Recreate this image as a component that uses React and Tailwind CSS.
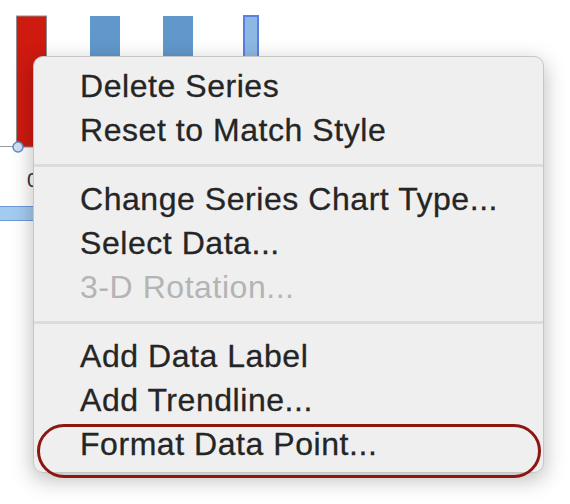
const groups = [
  [
    { label: 'Delete Series' },
    { label: 'Reset to Match Style' },
  ],
  [
    { label: 'Change Series Chart Type...' },
    { label: 'Select Data...' },
    { label: '3-D Rotation...', disabled: true },
  ],
  [
    { label: 'Add Data Label' },
    { label: 'Add Trendline...' },
    { label: 'Format Data Point...' },
  ],
]

// chart sitting behind the popup
const ChartBackdrop = () => (
  <svg width="570" height="504" viewBox="0 0 570 504" className="block">
    <rect width="570" height="504" fill="#ffffff" />
    {/* red series bar */}
    <rect x="16.5" y="16" width="30" height="131" fill="#cf1a10" stroke="#8e8e8e" strokeWidth="1" />
    {/* blue series bars */}
    <rect x="90" y="16" width="30" height="60" fill="#6198cb" />
    <rect x="163" y="16" width="30" height="60" fill="#6198cb" />
    <rect x="244" y="16" width="14" height="60" fill="#8cb8e2" stroke="#5b7fe2" strokeWidth="2" />
    {/* axis */}
    <line x1="0" y1="146.5" x2="17" y2="146.5" stroke="#9a9a9a" strokeWidth="1" />
    <circle cx="18" cy="147" r="5" fill="#cfe0f2" stroke="#5f8fc6" strokeWidth="1.5" />
    <text x="27" y="187" fontSize="20" fill="#333" fontFamily="Liberation Sans, Arial, sans-serif">0</text>
    {/* selected light blue bar */}
    <rect x="-1" y="206.5" width="40" height="14" fill="#a3cbf0" stroke="#6b9ad8" strokeWidth="1" />
  </svg>
)

const App = () => {
  return (
    <div className="relative w-[570px] h-[504px] overflow-hidden bg-white font-['Liberation_Sans',Arial,sans-serif]">
      <ChartBackdrop />

      {/* Context menu */}
      <div className="absolute left-[33px] top-[56px] w-[511px] bg-[#efefef] border border-[#c6c6c6] rounded-[10px] shadow-[0_6px_22px_rgba(0,0,0,0.28)] pt-[7px] pb-[6px]">
        {groups.map((group, gi) => (
          <div key={gi}>
            {gi > 0 && <div className="mt-[12px] mb-[10px] h-[3px] bg-[#dcdcdc]" />}
            {group.map(item => (
              <div
                key={item.label}
                className={`pl-[46px] text-[32px] leading-[44px] tracking-[0.55px] whitespace-nowrap
                  ${item.disabled
                    ? 'text-[#b4b4b4]'
                    : 'text-[#252525] [-webkit-text-stroke:0.3px_#252525]'}`}
              >
                {item.label}
              </div>
            ))}
          </div>
        ))}
      </div>

      {/* Highlight ring around the last item */}
      <div className="absolute left-[37px] top-[424px] w-[504px] h-[54px] rounded-full border-[3px] border-[#8c1610]" />
    </div>
  )
}

export default App
